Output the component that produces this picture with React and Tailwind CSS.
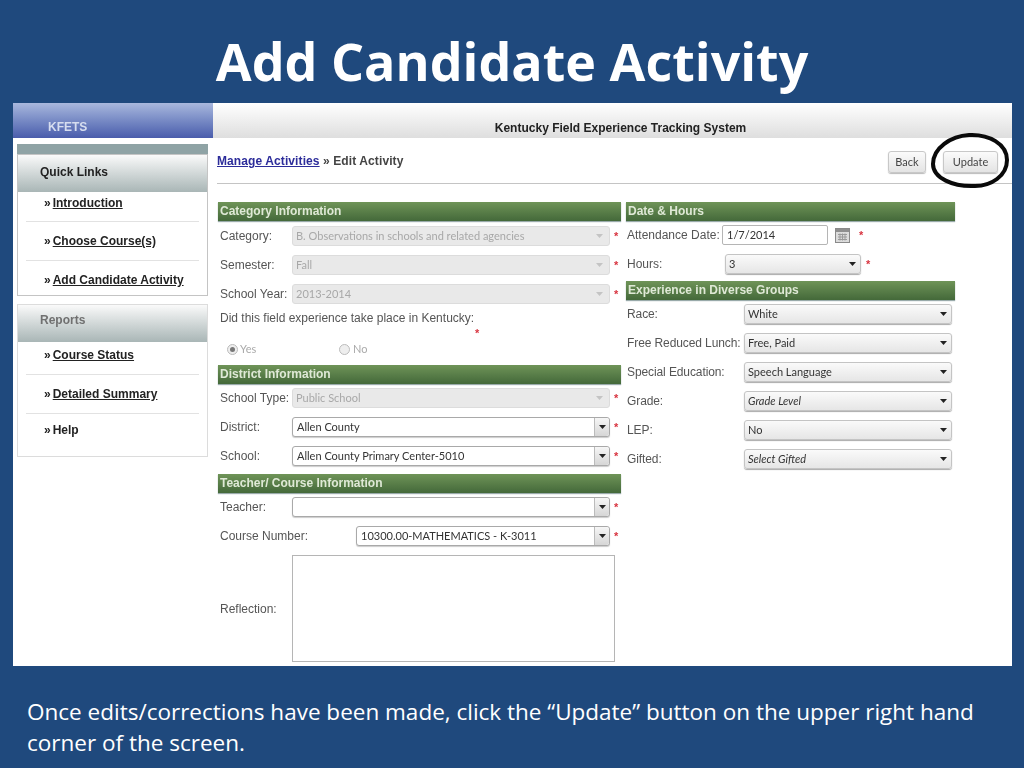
import React from 'react';

const categoryRows = [
  { label: 'Category:', value: 'B. Observations in schools and related agencies' },
  { label: 'Semester:', value: 'Fall' },
  { label: 'School Year:', value: '2013-2014' },
];

const districtRows = [
  { label: 'School Type:', value: 'Public School', disabled: true },
  { label: 'District:', value: 'Allen County' },
  { label: 'School:', value: 'Allen County Primary Center-5010' },
];

const diverseRows = [
  { label: 'Race:', value: 'White' },
  { label: 'Free Reduced Lunch:', value: 'Free, Paid' },
  { label: 'Special Education:', value: 'Speech Language' },
  { label: 'Grade:', value: 'Grade Level', hint: true },
  { label: 'LEP:', value: 'No' },
  { label: 'Gifted:', value: 'Select Gifted', hint: true },
];

const SectionHeading = ({ children }) => (
  <div className="h-[19px] bg-gradient-to-b from-[#6f9458] to-[#44693a] pl-[2px] text-[12px] leading-[18px] font-bold text-[#dfe9d6] shadow-[0_1px_1px_#9aa]">
    {children}
  </div>
);

const Arrow = ({ disabled }) => (
  <svg width="7" height="4" viewBox="0 0 7 4" className="shrink-0">
    <path d="M0 0h7L3.500 4z" fill={disabled ? '#c4c4c4' : '#222'} />
  </svg>
);

const Star = ({ className = '' }) => (
  <span className={`text-[11px] leading-none font-bold text-[#d8333f] ${className}`}>*</span>
);

// Kendo style combo box: disabled, with a split button, or plain gradient
const Select = ({ value, disabled, split, hint, className = '' }) => {
  if (disabled) {
    return (
      <div className={`flex h-[20px] items-center justify-between rounded-[3px] border border-[#dcdcdc] bg-[#e9e9e9] pr-[6px] pl-[3px] ${className}`}>
        <span className="text-[11px] text-[#a8a8a8] [font-family:Lato,sans-serif]">{value}</span>
        <Arrow disabled />
      </div>
    );
  }
  if (split) {
    return (
      <div className={`flex h-[20px] items-stretch rounded-[3px] border border-[#a9a9a9] bg-white shadow-[0_1px_1px_#ccc] ${className}`}>
        <span className="flex-1 pl-[4px] text-[11px] leading-[18px] text-[#333] [font-family:Lato,sans-serif]">{value}</span>
        <span className="flex w-[15px] items-center justify-center rounded-r-[3px] border-l border-[#bbb] bg-gradient-to-b from-[#f6f6f6] to-[#d6d6d6]">
          <Arrow />
        </span>
      </div>
    );
  }
  return (
    <div className={`flex h-[20px] items-center justify-between rounded-[3px] border border-[#c4c4c4] bg-gradient-to-b from-[#fafafa] to-[#e6e6e6] pr-[4px] pl-[3px] shadow-[0_1px_1px_#aaa] ${className}`}>
      <span className={`text-[11px] text-[#333] [font-family:Lato,sans-serif] ${hint ? 'italic' : ''}`}>{value}</span>
      <Arrow />
    </div>
  );
};

const LeftRow = ({ label, value, disabled, split }) => (
  <div className="mt-[9px] flex h-[20px] items-center first:mt-[4px]">
    <span className="w-[74px] shrink-0 pl-[2px] text-[12px] whitespace-nowrap text-[#555]">{label}</span>
    <Select value={value} disabled={disabled} split={split} className="w-[318px]" />
    <Star className="ml-[4px]" />
  </div>
);

const NavPanel = ({ title, titleClass, className = '', children }) => (
  <div className={`border bg-white ${className}`}>
    <div className={`flex h-[37px] items-center bg-gradient-to-b from-[#fafafa] to-[#a9b6b6] text-[12px] font-bold ${titleClass}`}>
      {title}
    </div>
    {children}
  </div>
);

const NavLink = ({ children, plain, rule = true, height }) => (
  <div className={`${height} px-[8px]`}>
    <div className={`h-full pl-[18px] text-[12px] font-bold text-[#222] ${rule ? 'border-b border-[#e2e2e2]' : ''}`}>
      <span className="mr-[2px]">»</span>
      <span className={plain ? '' : 'underline'}>{children}</span>
    </div>
  </div>
);

const Sidebar = () => (
  <div className="w-[204px] shrink-0 pt-[6px] pl-[4px]">
    <div className="h-[10px] w-[191px] bg-[#8fa3a5]" />
    <NavPanel title="Quick Links" titleClass="pb-[4px] pl-[22px] text-[#222]" className="h-[142px] w-[191px] border-[#c4c4c4]">
      <NavLink height="h-[30px]"><span className="leading-[22px]">Introduction</span></NavLink>
      <NavLink height="h-[39px] pt-[10px]">Choose Course(s)</NavLink>
      <NavLink height="h-[34px] pt-[10px]" rule={false}>Add Candidate Activity</NavLink>
    </NavPanel>
    <NavPanel title="Reports" titleClass="pb-[8px] pl-[22px] text-[#707070]" className="mt-[8px] h-[153px] w-[191px] border-[#dcdcdc]">
      <NavLink height="h-[33px]"><span className="leading-[26px]">Course Status</span></NavLink>
      <NavLink height="h-[39px] pt-[10px]">Detailed Summary</NavLink>
      <NavLink height="h-[34px] pt-[7px]" rule={false} plain>Help</NavLink>
    </NavPanel>
  </div>
);

const CalendarIcon = () => (
  <svg width="15" height="15" viewBox="0 0 15 15" className="ml-[7px] shrink-0">
    <rect x="0.500" y="0.500" width="14" height="14" fill="#dcdcdc" stroke="#8a8a8a" />
    <rect x="1" y="1" width="13" height="3" fill="#8f8f8f" />
    <path d="M3 6.500h9M3 9h9M3 11.500h9M5 5.500v7M7.500 5.500v7M10 5.500v7" stroke="#9a9a9a" strokeWidth="1" />
  </svg>
);

const Radio = ({ checked }) => (
  <span className="flex size-[11px] items-center justify-center rounded-full border border-[#bbb] bg-[#eee]">
    {checked && <span className="size-[5px] rounded-full bg-[#777]" />}
  </span>
);

const LeftColumn = () => (
  <div className="w-[403px] shrink-0">
    <SectionHeading>Category Information</SectionHeading>
    <div className="pt-[1px]">
      {categoryRows.map((row) => (
        <LeftRow key={row.label} {...row} disabled />
      ))}
    </div>
    <div className="mt-[7px] pl-[2px] text-[12px] leading-[14px] text-[#555]">Did this field experience take place in Kentucky:</div>
    <div className="mt-[2px] h-[9px] pl-[257px] leading-[9px]"><Star /></div>
    <div className="mt-[4px] flex h-[18px] items-center pl-[9px] text-[11px] text-[#aaa] [font-family:Lato,sans-serif]">
      <Radio checked />
      <span className="ml-[2px] w-[99px]">Yes</span>
      <Radio />
      <span className="ml-[3px]">No</span>
    </div>
    <div className="mt-[7px]">
      <SectionHeading>District Information</SectionHeading>
    </div>
    <div>
      {districtRows.map((row) => (
        <LeftRow key={row.label} {...row} split={!row.disabled} />
      ))}
    </div>
    <div className="mt-[8px]">
      <SectionHeading>Teacher/ Course Information</SectionHeading>
    </div>
    <div>
      <LeftRow label="Teacher:" value="" split />
    </div>
    <div className="mt-[9px] flex h-[20px] items-center">
      <span className="w-[138px] shrink-0 pl-[2px] text-[12px] text-[#555]">Course Number:</span>
      <Select value="10300.00-MATHEMATICS - K-3011" split className="w-[254px]" />
      <Star className="ml-[4px]" />
    </div>
    <div className="mt-[9px] flex items-center">
      <span className="w-[74px] shrink-0 pl-[2px] text-[12px] text-[#555]">Reflection:</span>
      <div className="h-[107px] w-[323px] border border-[#b5b5b5] bg-white" />
    </div>
  </div>
);

const RightColumn = () => (
  <div className="ml-[5px] w-[329px] shrink-0">
    <SectionHeading>Date &amp; Hours</SectionHeading>
    <div className="mt-[4px] flex h-[20px] items-center">
      <span className="w-[96px] shrink-0 pl-[1px] text-[12px] whitespace-nowrap text-[#555]">Attendance Date:</span>
      <div className="h-[20px] w-[106px] rounded-[2px] border border-[#b5b5b5] pl-[4px] text-[11px] leading-[18px] text-[#333] [font-family:Lato,sans-serif]">1/7/2014</div>
      <CalendarIcon />
      <Star className="ml-[9px]" />
    </div>
    <div className="mt-[9px] flex h-[20px] items-center">
      <span className="w-[99px] shrink-0 pl-[1px] text-[12px] text-[#555]">Hours:</span>
      <Select value="3" className="w-[136px]" />
      <Star className="ml-[5px]" />
    </div>
    <div className="mt-[7px]">
      <SectionHeading>Experience in Diverse Groups</SectionHeading>
    </div>
    <div>
      {diverseRows.map((row) => (
        <div key={row.label} className="mt-[9px] flex h-[20px] items-center first:mt-[4px]">
          <span className="w-[118px] shrink-0 pl-[1px] text-[12px] tracking-[-0.1px] whitespace-nowrap text-[#555]">{row.label}</span>
          <Select value={row.value} hint={row.hint} className="w-[208px]" />
        </div>
      ))}
    </div>
  </div>
);

const ActionButton = ({ children, className = '' }) => (
  <button className={`h-[22px] rounded-[3px] border border-[#c8c8c8] bg-gradient-to-b from-[#fbfbfb] to-[#e4e4e4] text-[11px] text-[#444] shadow-[0_1px_1px_#bbb] [font-family:Lato,sans-serif] ${className}`}>
    {children}
  </button>
);

const App = () => {
  return (
    <div className="flex h-[768px] w-[1024px] flex-col overflow-hidden bg-[#1f497d] [font-family:'Liberation_Sans',Arial,sans-serif]">
      <h1 className="h-[103px] shrink-0 pt-[22px] text-center text-[52px] leading-[78px] font-bold text-white [font-family:'Open_Sans',sans-serif]">
        Add Candidate Activity
      </h1>

      <div className="relative mx-[13px] flex h-[563px] w-[999px] shrink-0 flex-col bg-white">
        <div className="flex h-[35px] shrink-0 blur-[0.4px]">
          <div className="w-[200px] bg-gradient-to-b from-[#a9b8dd] to-[#4a5cab] pt-[16px] pl-[35px] text-[12px] leading-[16px] font-bold text-[#d6ddef]">
            KFETS
          </div>
          <div className="flex-1 bg-gradient-to-b from-[#ffffff] to-[#dedede] pt-[17px] pl-[16px] text-center text-[12px] leading-[16px] font-bold text-[#222]">
            Kentucky Field Experience Tracking System
          </div>
        </div>

        <div className="flex flex-1 blur-[0.4px]">
          <Sidebar />
          <div className="flex-1">
            <div className="flex h-[46px] items-start justify-between border-b border-[#c4c4c4] pt-[13px]">
              <div className="pt-[1px] text-[12px] font-bold tracking-[0.1px] text-[#444]">
                <span className="text-[#2c2c9a] underline">Manage Activities</span> » Edit Activity
              </div>
              <div className="mr-[14px] flex">
                <ActionButton className="w-[38px]">Back</ActionButton>
                <ActionButton className="ml-[17px] w-[55px]">Update</ActionButton>
              </div>
            </div>
            <div className="mt-[18px] flex pl-[1px]">
              <LeftColumn />
              <RightColumn />
            </div>
          </div>
        </div>

        {/* hand drawn circle round the Update button */}
        <svg width="84" height="60" viewBox="0 0 84 60" className="absolute top-[29px] left-[916px]">
          <path
            d="M40 3C60 2 78 12 78 28C78 44 62 54 46 54C24 55 4 46 4 32C4 16 22 4 40 3z"
            fill="none"
            stroke="#0a0a0a"
            strokeWidth="4"
          />
        </svg>
      </div>

      <p className="mt-[30px] ml-[27px] w-[970px] text-[22.500px] leading-[31px] text-white [font-family:'Open_Sans',sans-serif]">
        Once edits/corrections have been made, click the “Update” button on the upper right hand corner of the screen.
      </p>
    </div>
  );
};

export default App;
